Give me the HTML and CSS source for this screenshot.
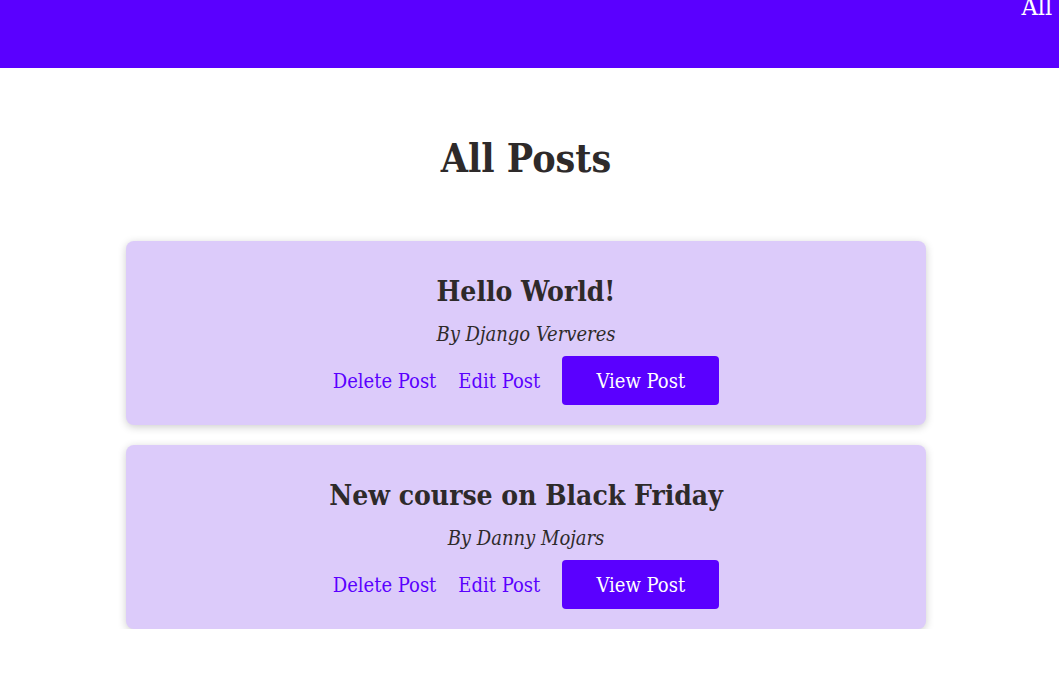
FILE: index.html
```html
<!DOCTYPE html>
<html lang="en">
<head>
<meta charset="utf-8">
<title>All Posts</title>
<link rel="stylesheet" href="styles.css">
</head>
<body>
<header class="site-header">
  <nav class="nav">
    <a class="nav-link" href="#">All Posts</a>
  </nav>
</header>
<main class="content">
  <h1 class="page-title">All Posts</h1>
  <ul class="post-list">
    <li class="post-card">
      <h2 class="post-title">Hello World!</h2>
      <p class="post-author">By Django Ververes</p>
      <div class="post-actions">
        <a class="action-link" href="#">Delete Post</a>
        <a class="action-link" href="#">Edit Post</a>
        <a class="btn" href="#">View Post</a>
      </div>
    </li>
    <li class="post-card">
      <h2 class="post-title">New course on Black Friday</h2>
      <p class="post-author">By Danny Mojars</p>
      <div class="post-actions">
        <a class="action-link" href="#">Delete Post</a>
        <a class="action-link" href="#">Edit Post</a>
        <a class="btn" href="#">View Post</a>
      </div>
    </li>
  </ul>
</main>
</body>
</html>
```
FILE: styles.css
```css
* { box-sizing: border-box; }
html, body { margin: 0; padding: 0; }
body {
  font-family: "DejaVu Serif", "Liberation Serif", serif;
  font-stretch: condensed;
  color: #2e2a2a;
  background: #fff;
  overflow-x: hidden;
}
.site-header {
  height: 68px;
  background: #5a00ff;
  display: flex;
  justify-content: flex-end;
  overflow: hidden;
}
.nav {
  margin-right: -60px;
  margin-top: -9px;
}
.nav-link {
  color: #fff;
  text-decoration: none;
  font-size: 25px;
  line-height: 32px;
  white-space: nowrap;
}
.content {
  display: flex;
  flex-direction: column;
  align-items: center;
  padding-right: 7px;
}
.page-title {
  margin: 60px 0 0;
  font-size: 39px;
  font-weight: 700;
  line-height: 60px;
}
.post-list {
  list-style: none;
  margin: 53px 0 0;
  padding: 0;
  width: 800px;
  display: flex;
  flex-direction: column;
  gap: 20px;
}
.post-card {
  background: #dccbfa;
  border-radius: 8px;
  box-shadow: 0 2px 8px rgba(0,0,0,0.2);
  padding: 33px 20px 20px;
  display: flex;
  flex-direction: column;
  align-items: center;
  height: 184px;
}
.post-title {
  margin: 0;
  font-size: 28px;
  font-weight: 700;
  line-height: 36px;
}
.post-author {
  margin: 10px 0 0;
  font-size: 20px;
  font-style: italic;
  line-height: 28px;
}
.post-actions {
  margin-top: 8px;
  display: flex;
  align-items: center;
}
.action-link {
  color: #5a00ff;
  text-decoration: none;
  font-size: 20px;
  margin-right: 22px;
}
.btn {
  display: inline-flex;
  align-items: center;
  justify-content: center;
  width: 157px;
  height: 49px;
  background: #5a00ff;
  color: #fff;
  border-radius: 4px;
  text-decoration: none;
  font-size: 20px;
}
```
